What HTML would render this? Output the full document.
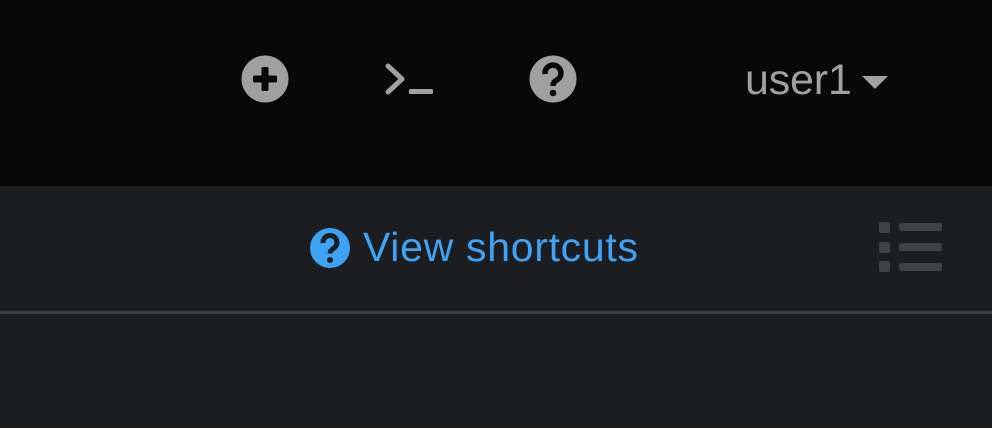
<!DOCTYPE html>
<html><head><style>
html,body{margin:0;padding:0;width:992px;height:428px;overflow:hidden;background:#1b1d21;font-family:"Liberation Sans",sans-serif;}
.top{position:absolute;left:0;top:0;width:992px;height:186px;background:#080808;}
.line{position:absolute;left:0;top:311px;width:992px;height:3px;background:#3c3f42;}
.t{position:absolute;white-space:nowrap;}
</style></head><body>
<div class="top"></div>
<svg width="992" height="428" style="position:absolute;left:0;top:0">
  <circle cx="265" cy="79" r="23.5" fill="#a0a0a0"/>
  <rect x="253" y="75.5" width="24" height="7" rx="1.5" fill="#080808"/>
  <rect x="261.5" y="67" width="7" height="24" rx="1.5" fill="#080808"/>
  <path d="M388 66 L402 79 L388 92" stroke="#a0a0a0" stroke-width="5" fill="none" stroke-linecap="round" stroke-linejoin="round"/>
  <rect x="409" y="89" width="24" height="5" rx="1" fill="#a0a0a0"/>
  <circle cx="553" cy="79" r="23.5" fill="#a0a0a0"/>
  <path d="M545 74 a8 8 0 1 1 12 6 q-4 2 -4 6" stroke="#080808" stroke-width="5.5" fill="none"/>
  <circle cx="553" cy="93" r="3.3" fill="#080808"/>
  <path d="M862 76 L888 76 L875 89 Z" fill="#a0a0a0"/>
  <circle cx="330" cy="248" r="20" fill="#3ea3f5"/>
  <path d="M323 243 a7 7 0 1 1 10.5 5.5 q-3.5 2 -3.5 5" stroke="#1b1d21" stroke-width="5" fill="none"/>
  <circle cx="330" cy="260" r="3" fill="#1b1d21"/>
  <g fill="#404245">
    <rect x="879" y="222" width="11" height="11" rx="2"/>
    <rect x="879" y="242" width="11" height="11" rx="2"/>
    <rect x="879" y="261" width="11" height="11" rx="2"/>
    <rect x="899" y="223" width="43" height="8" rx="2"/>
    <rect x="899" y="243" width="43" height="8" rx="2"/>
    <rect x="899" y="263" width="43" height="8" rx="2"/>
  </g>
</svg>
<div class="t" style="left:745px;top:56px;font-size:43px;color:#a0a0a0;letter-spacing:-0.2px;">user1</div>
<div class="t" style="left:363px;top:224px;font-size:41px;color:#3ea3f5;letter-spacing:0.7px;">View shortcuts</div>
<div class="line"></div>
</body></html>
